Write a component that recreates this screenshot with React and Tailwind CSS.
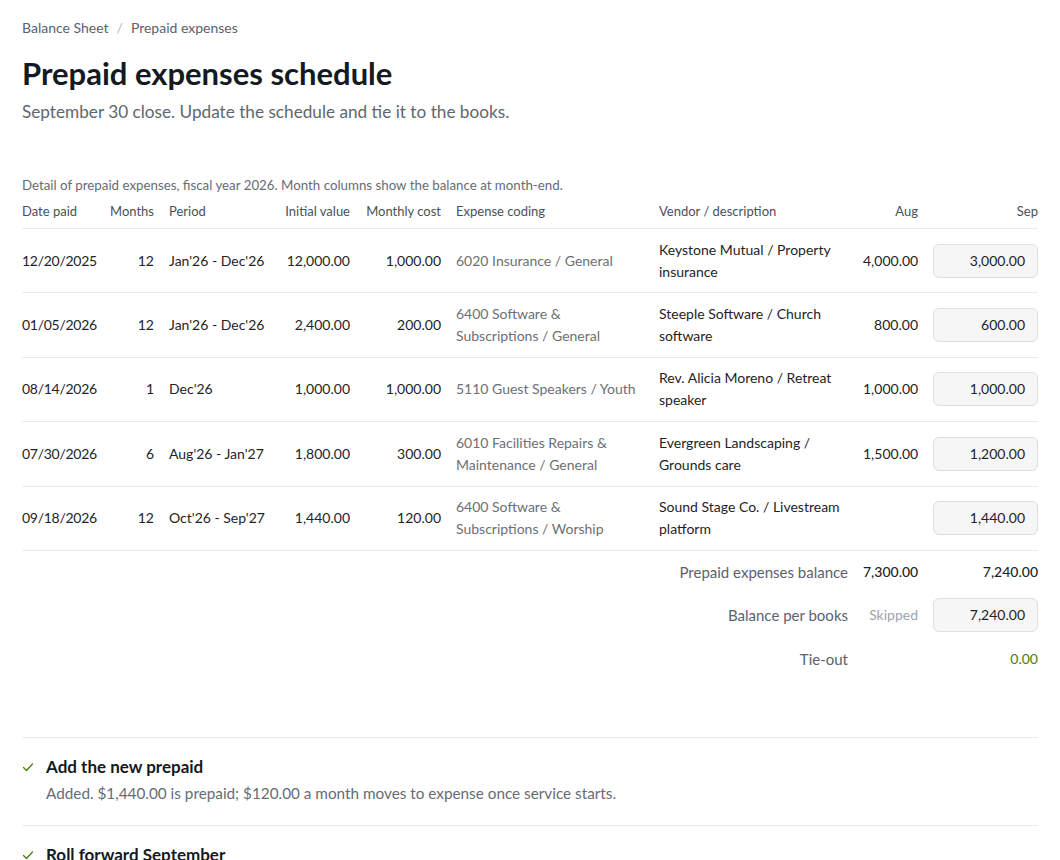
import React from "react";

const rows = [
  { date: "12/20/2025", months: "12", period: "Jan'26 - Dec'26", initial: "12,000.00", monthly: "1,000.00", coding: "6020 Insurance / General", vendor: "Keystone Mutual / Property insurance", aug: "4,000.00", sep: "3,000.00" },
  { date: "01/05/2026", months: "12", period: "Jan'26 - Dec'26", initial: "2,400.00", monthly: "200.00", coding: "6400 Software & Subscriptions / General", vendor: "Steeple Software / Church software", aug: "800.00", sep: "600.00" },
  { date: "08/14/2026", months: "1", period: "Dec'26", initial: "1,000.00", monthly: "1,000.00", coding: "5110 Guest Speakers / Youth", vendor: "Rev. Alicia Moreno / Retreat speaker", aug: "1,000.00", sep: "1,000.00" },
  { date: "07/30/2026", months: "6", period: "Aug'26 - Jan'27", initial: "1,800.00", monthly: "300.00", coding: "6010 Facilities Repairs & Maintenance / General", vendor: "Evergreen Landscaping / Grounds care", aug: "1,500.00", sep: "1,200.00" },
  { date: "09/18/2026", months: "12", period: "Oct'26 - Sep'27", initial: "1,440.00", monthly: "120.00", coding: "6400 Software & Subscriptions / Worship", vendor: "Sound Stage Co. / Livestream platform", aug: "", sep: "1,440.00" },
];

const grid = "grid grid-cols-[73px_44px_100px_66px_76px_188px_189px_55px_1fr] gap-x-[15px]";

function Check() {
  return (
    <svg width="12" height="12" viewBox="0 0 12 12" fill="none" className="shrink-0">
      <path d="M1.5 6.5 L4.5 9.5 L10.5 3" stroke="#4d7c0f" strokeWidth="1.3" strokeLinecap="round" strokeLinejoin="round" />
    </svg>
  );
}

function SepInput({ value }) {
  return (
    <div className="h-[34px] w-full rounded-md border border-[#dedede] bg-[#f6f6f6] flex items-center justify-end pr-3 text-[14px] text-[#1f2328]">
      {value}
    </div>
  );
}

export default function App() {
  return (
    <div className="min-h-screen bg-white text-[#1f2328] px-[22px] pt-[19px]" style={{ fontFamily: "Lato, 'Noto Sans', sans-serif" }}>
      <div className="flex items-center text-[14px] leading-[18px] text-[#5a6270]">
        <span>Balance Sheet</span>
        <span className="mx-[8px] text-[#b3b8bf]">/</span>
        <span>Prepaid expenses</span>
      </div>
      <h1 className="mt-[18px] text-[31px] leading-[36px] font-bold text-[#141a22]">Prepaid expenses schedule</h1>
      <p className="mt-[9px] text-[17.2px] leading-[24px] text-[#5f6670]">September 30 close. Update the schedule and tie it to the books.</p>

      <p className="mt-[52px] text-[13.3px] leading-[18px] text-[#656c76]">Detail of prepaid expenses, fiscal year 2026. Month columns show the balance at month-end.</p>

      <div className={`${grid} pt-[8px] pb-[8px] border-b border-[#e8e9eb] text-[13px] leading-[18px] text-[#4a515b] whitespace-nowrap`}>
        <div>Date paid</div>
        <div className="text-right">Months</div>
        <div>Period</div>
        <div className="text-right">Initial value</div>
        <div className="text-right">Monthly cost</div>
        <div>Expense coding</div>
        <div>Vendor / description</div>
        <div className="text-right">Aug</div>
        <div className="text-right">Sep</div>
      </div>

      {rows.map((r) => (
        <div key={r.date} className={`${grid} items-center h-[64.4px] border-b border-[#e8e9eb] text-[14px] leading-[22px]`}>
          <div className="whitespace-nowrap tracking-[-0.02em]">{r.date}</div>
          <div className="text-right">{r.months}</div>
          <div className="whitespace-nowrap">{r.period}</div>
          <div className="text-right whitespace-nowrap">{r.initial}</div>
          <div className="text-right whitespace-nowrap">{r.monthly}</div>
          <div className="text-[#6b7078]">{r.coding}</div>
          <div>{r.vendor}</div>
          <div className="text-right whitespace-nowrap">{r.aug}</div>
          <div><SepInput value={r.sep} /></div>
        </div>
      ))}

      <div className={`${grid} items-center h-[42px] text-[14px]`}>
        <div className="col-span-7 text-right text-[15px] text-[#5a6270]">Prepaid expenses balance</div>
        <div className="text-right font-medium">7,300.00</div>
        <div className="text-right font-medium">7,240.00</div>
      </div>
      <div className={`${grid} items-center h-[44px] text-[14px]`}>
        <div className="col-span-7 text-right text-[15px] text-[#5a6270]">Balance per books</div>
        <div className="text-right text-[#a0a5ac]">Skipped</div>
        <div><SepInput value="7,240.00" /></div>
      </div>
      <div className={`${grid} items-center h-[44px] text-[14px]`}>
        <div className="col-span-7 text-right text-[15px] text-[#5a6270]">Tie-out</div>
        <div></div>
        <div className="text-right text-[#4d7c0f]">0.00</div>
      </div>

      <div className="mt-[56px] border-t border-[#e8e9eb] pt-[18px] pb-[22px]">
        <div className="flex items-center gap-[12px]">
          <Check />
          <div className="text-[17px] leading-[22px] font-bold text-[#141a22]">Add the new prepaid</div>
        </div>
        <div className="pl-[24px] mt-[5px] text-[15.3px] leading-[20px] text-[#656c76]">Added. $1,440.00 is prepaid; $120.00 a month moves to expense once service starts.</div>
      </div>
      <div className="border-t border-[#e8e9eb] pt-[18px] pb-[22px]">
        <div className="flex items-center gap-[12px]">
          <Check />
          <div className="text-[17px] leading-[22px] font-bold text-[#141a22]">Roll forward September</div>
        </div>
        <div className="pl-[24px] mt-[5px] text-[15.3px] leading-[20px] text-[#656c76]">Rolled forward. Balances now show September month-end.</div>
      </div>
    </div>
  );
}
